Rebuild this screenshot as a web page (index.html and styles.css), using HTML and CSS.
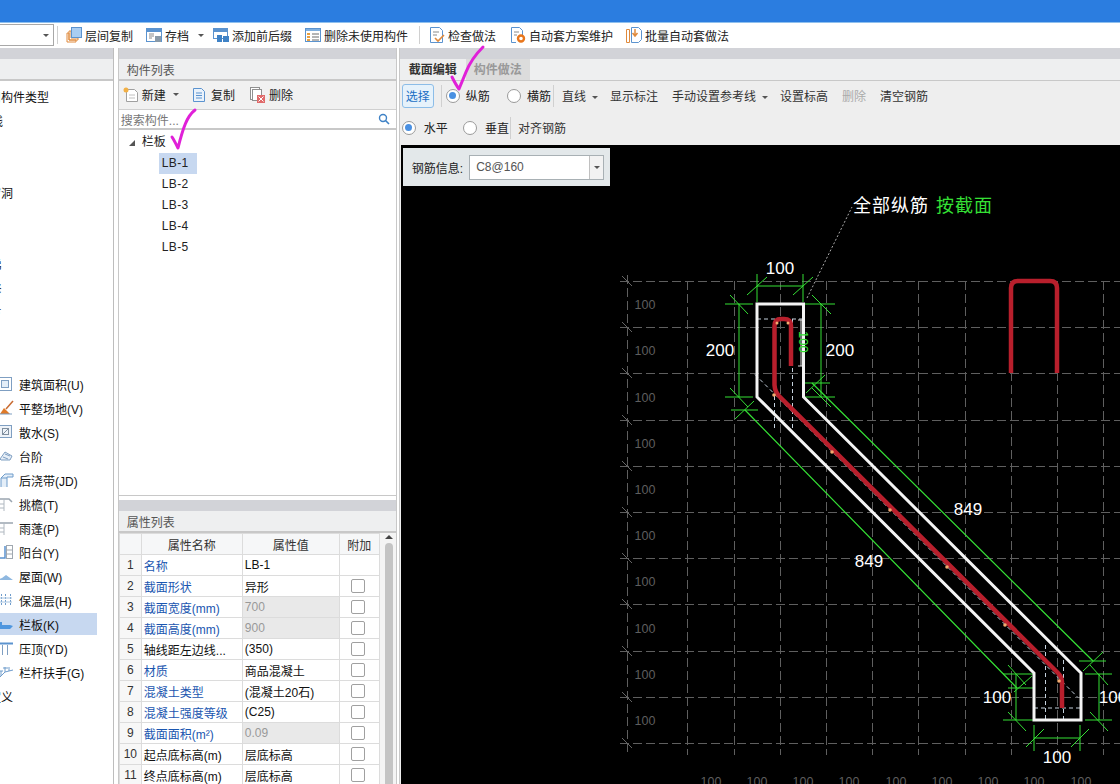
FILE: index.html
```html
<!DOCTYPE html>
<html lang="en">
<head>
    <meta charset="UTF-8">
    <title>截面编辑</title>
    <link rel="stylesheet" href="styles.css">
</head>
<body>
    <div class="titlebar"></div>

    <div class="toolbar">
        <div class="combo"><span class="arrow"></span></div>
        <span class="sep sep-first"></span>
        <div class="tool tool-tight">
            <svg viewBox="0 0 16 16"><path d="M1 15V6h2v7h7v2z" fill="none" stroke="#e08a3c"/><path d="M3 13V4h2v7h7v2z" fill="none" stroke="#e08a3c"/><rect x="5.500" y="0.500" width="10" height="10" fill="#a9cdf2" stroke="#5b93cf"/></svg>
            <span>层间复制</span>
        </div>
        <div class="tool tool-drop">
            <svg viewBox="0 0 16 16"><rect x="0.500" y="1.500" width="15" height="13" fill="#fff" stroke="#5b93cf"/><path d="M1 2h14v3H1z" fill="#5b93cf"/><path d="M3 7h5M3 9h5M3 11h3" stroke="#8a8a8a"/><rect x="9" y="9" width="6" height="6" fill="#8a9aa8"/></svg>
            <span>存档</span>
            <span class="arrow"></span>
        </div>
        <div class="tool tool-tight">
            <svg viewBox="0 0 16 16"><rect x="0.500" y="1.500" width="14" height="10" fill="#fff" stroke="#5b93cf"/><path d="M1 2h13v3H1z" fill="#5b93cf"/><rect x="4" y="8" width="5" height="7" fill="#3f82c6"/><rect x="10" y="9" width="6" height="6" fill="#3f82c6"/></svg>
            <span>添加前后缀</span>
        </div>
        <div class="tool">
            <svg viewBox="0 0 16 16"><rect x="0.500" y="1.500" width="15" height="13" fill="#fff" stroke="#5b93cf"/><path d="M1 2h14v2H1z" fill="#7fb0e0"/><path d="M7 7h7M7 10h7M7 13h7" stroke="#6a6a6a"/><path d="M2 6h3v2H2zM2 9h3v2H2zM2 12h3v2H2z" fill="#e8a040"/></svg>
            <span>删除未使用构件</span>
        </div>
        <span class="sep sep-mid"></span>
        <div class="tool">
            <svg viewBox="0 0 16 16"><path d="M1.500 0.500h9l3 3v12h-12z" fill="#fff" stroke="#5b93cf"/><path d="M4 5h6M4 8h4" stroke="#8a8a8a"/><path d="M6 11l3 3 6-6" fill="none" stroke="#e08a3c" stroke-width="1.600"/></svg>
            <span>检查做法</span>
        </div>
        <div class="tool tool-tight">
            <svg viewBox="0 0 16 16"><path d="M1.500 0.500h8l3 3v6M6 15.500H1.500v-15" fill="#fff" stroke="#5b93cf"/><path d="M4 5h5M4 8h3" stroke="#8a8a8a"/><circle cx="11" cy="11.500" r="3" fill="none" stroke="#e8761c" stroke-width="2.400"/></svg>
            <span>自动套方案维护</span>
        </div>
        <div class="tool">
            <svg viewBox="0 0 16 16"><path d="M0.500 2.500h3v13h-3z" fill="#fff" stroke="#e08a3c"/><path d="M5.500 0.500h7l3 3v9l-3 3h-7z" fill="#fff" stroke="#5b93cf"/><path d="M9 2v6M6.500 6L9 9l2.500-3" fill="none" stroke="#e08a3c" stroke-width="1.500"/></svg>
            <span>批量自动套做法</span>
        </div>
    </div>

    <div class="main">
        <div class="side">
            <div class="strip"></div>
            <div class="panel-head"></div>
            <ul class="nav">
                <li><span class="cut">常用构件类型</span></li>
                <li><span class="cut-two">轴线</span></li>
                <li></li>
                <li></li>
                <li><span class="cut">门窗洞</span></li>
                <li></li>
                <li></li>
                <li><span class="cut-dot">楼梯</span></li>
                <li><span class="cut-dot">装修</span></li>
                <li><span class="cut-dot">土方</span></li>
                <li></li>
                <li></li>
                <li>
                    <svg class="nav-icon" viewBox="0 0 20 20"><rect x="2.500" y="3.500" width="13" height="13" fill="none" stroke="#7f9fc2"/><rect x="5.500" y="6.500" width="7" height="7" fill="#e4eef8" stroke="#7f9fc2"/></svg>
                    <span>建筑面积(U)</span>
                </li>
                <li>
                    <svg class="nav-icon" viewBox="0 0 20 20"><path d="M4 16l4-6 6 6z" fill="#e07a28"/><path d="M10 11l7-8" stroke="#c86a30" stroke-width="1.500"/><path d="M2 16h14" stroke="#7f9fc2"/></svg>
                    <span>平整场地(V)</span>
                </li>
                <li>
                    <svg class="nav-icon" viewBox="0 0 20 20"><rect x="3.500" y="3.500" width="12" height="12" fill="#eef3f9" stroke="#7f9fc2"/><rect x="6.500" y="6.500" width="6" height="6" fill="none" stroke="#7f8f9f"/><path d="M7 12l5-5" stroke="#7f8f9f"/></svg>
                    <span>散水(S)</span>
                </li>
                <li>
                    <svg class="nav-icon" viewBox="0 0 20 20"><path d="M4 13l5-7 7 4-2 4H5z" fill="#e6eef7" stroke="#7f9fc2"/><path d="M7 11l5 2M9 8l5 2" stroke="#7f9fc2"/></svg>
                    <span>台阶</span>
                </li>
                <li>
                    <svg class="nav-icon" viewBox="0 0 20 20"><path d="M5 17V8l4-4h8v3h-6v10" fill="#e4eef8" stroke="#6f9ccb"/><path d="M5 8h6" stroke="#6f9ccb"/></svg>
                    <span>后浇带(JD)</span>
                </li>
                <li>
                    <svg class="nav-icon" viewBox="0 0 20 20"><path d="M3 17V5h10l3 3" fill="none" stroke="#9aa5b0" stroke-width="1.500"/><path d="M8 5v12M3 10h5M3 14h5" stroke="#b0b8c0"/></svg>
                    <span>挑檐(T)</span>
                </li>
                <li>
                    <svg class="nav-icon" viewBox="0 0 20 20"><path d="M3 17V5h14" fill="none" stroke="#9aa5b0" stroke-width="1.500"/><path d="M8 5v12M3 10h5M3 14h5" stroke="#b0b8c0"/></svg>
                    <span>雨蓬(P)</span>
                </li>
                <li>
                    <svg class="nav-icon" viewBox="0 0 20 20"><path d="M2 16h7V4" fill="none" stroke="#5b93cf" stroke-width="1.500"/><rect x="10.500" y="3.500" width="6" height="13" fill="none" stroke="#a0a8b0"/><path d="M11 8h5M11 12h5" stroke="#a0a8b0"/></svg>
                    <span>阳台(Y)</span>
                </li>
                <li>
                    <svg class="nav-icon" viewBox="0 0 20 20"><path d="M1 14l5-2 4-3 7 5z" fill="#8fb8e0"/></svg>
                    <span>屋面(W)</span>
                </li>
                <li>
                    <svg class="nav-icon" viewBox="0 0 20 20"><path d="M5.500 4v12M9.500 4v12M14.500 4v12" stroke="#6f9ccb" stroke-dasharray="2 1"/><path d="M4 8h12M4 12h12" stroke="#a8c4e0"/></svg>
                    <span>保温层(H)</span>
                </li>
                <li class="selected">
                    <svg class="nav-icon" viewBox="0 0 20 20"><path d="M3 8h3v3h8l3 1-3 3H3z" fill="#4f96de"/></svg>
                    <span>栏板(K)</span>
                </li>
                <li>
                    <svg class="nav-icon" viewBox="0 0 20 20"><path d="M2 5.500h15" stroke="#5b93cf" stroke-width="2"/><path d="M6.500 7v10M11.500 7v10" stroke="#7f9fc2"/></svg>
                    <span>压顶(YD)</span>
                </li>
                <li>
                    <svg class="nav-icon" viewBox="0 0 20 20"><path d="M3 16l6-6 8-2" fill="none" stroke="#6f9ccb"/><path d="M5 14V9M9 10V5M13 9V5M3 9h4M7 6h5" stroke="#6f9ccb"/></svg>
                    <span>栏杆扶手(G)</span>
                </li>
                <li><span class="cut">自定义</span></li>
            </ul>
        </div>

        <div class="middle">
            <div class="strip"></div>
            <div class="panel-head panel-title">构件列表</div>
            <div class="list-tools">
                <div class="tool tool-new">
                    <svg viewBox="0 0 16 16"><path d="M3.500 2.500h8l3 3v9h-11z" fill="#fff" stroke="#a0a0a0"/><path d="M6 8h6M6 11h6" stroke="#c0c0c0"/><circle cx="3" cy="3" r="2.500" fill="#f2b046"/></svg>
                    <span>新建</span>
                    <span class="arrow"></span>
                </div>
                <div class="tool">
                    <svg viewBox="0 0 16 16"><path d="M1.500 1.500h8l3 3v10h-11z" fill="#eaf2fb" stroke="#5b93cf"/><path d="M4 6h6M4 8.500h6M4 11h6" stroke="#5b93cf"/></svg>
                    <span>复制</span>
                </div>
                <div class="tool">
                    <svg viewBox="0 0 16 16"><rect x="0.500" y="0.500" width="9" height="12" fill="#fff" stroke="#909090"/><rect x="2.500" y="2.500" width="9" height="11" fill="#fff" stroke="#909090"/><rect x="7" y="8" width="8" height="8" fill="#e06a6a"/><path d="M8.500 9.500l5 5M13.500 9.500l-5 5" stroke="#fff"/></svg>
                    <span>删除</span>
                </div>
            </div>
            <div class="search">
                <span>搜索构件...</span>
                <svg viewBox="0 0 12 12"><circle cx="5" cy="5" r="3.500" fill="none" stroke="#3f82c6" stroke-width="1.400"/><path d="M7.500 7.500L11 11" stroke="#3f82c6" stroke-width="1.600"/></svg>
            </div>
            <div class="tree">
                <div class="tree-root"><span class="tree-caret"></span>栏板</div>
                <div class="tree-item active">LB-1</div>
                <div class="tree-item">LB-2</div>
                <div class="tree-item">LB-3</div>
                <div class="tree-item">LB-4</div>
                <div class="tree-item">LB-5</div>
            </div>

            <div class="strip"></div>
            <div class="panel-head panel-title">属性列表</div>
            <div class="props">
                <table>
                    <tr>
                        <th class="no-col"></th>
                        <th class="name-col">属性名称</th>
                        <th class="value-col">属性值</th>
                        <th class="extra-col">附加</th>
                    </tr>
                    <tr>
                        <td class="no">1</td><td class="name blue">名称</td><td class="val">LB-1</td><td></td>
                    </tr>
                    <tr>
                        <td class="no">2</td><td class="name blue">截面形状</td><td class="val">异形</td><td><span class="check"></span></td>
                    </tr>
                    <tr>
                        <td class="no">3</td><td class="name blue">截面宽度(mm)</td><td class="val off">700</td><td><span class="check"></span></td>
                    </tr>
                    <tr>
                        <td class="no">4</td><td class="name blue">截面高度(mm)</td><td class="val off">900</td><td><span class="check"></span></td>
                    </tr>
                    <tr>
                        <td class="no">5</td><td class="name">轴线距左边线...</td><td class="val">(350)</td><td><span class="check"></span></td>
                    </tr>
                    <tr>
                        <td class="no">6</td><td class="name blue">材质</td><td class="val">商品混凝土</td><td><span class="check"></span></td>
                    </tr>
                    <tr>
                        <td class="no">7</td><td class="name blue">混凝土类型</td><td class="val">(混凝土20石)</td><td><span class="check"></span></td>
                    </tr>
                    <tr>
                        <td class="no">8</td><td class="name blue">混凝土强度等级</td><td class="val">(C25)</td><td><span class="check"></span></td>
                    </tr>
                    <tr>
                        <td class="no">9</td><td class="name blue">截面面积(m²)</td><td class="val off">0.09</td><td><span class="check"></span></td>
                    </tr>
                    <tr>
                        <td class="no">10</td><td class="name">起点底标高(m)</td><td class="val">层底标高</td><td><span class="check"></span></td>
                    </tr>
                    <tr>
                        <td class="no">11</td><td class="name">终点底标高(m)</td><td class="val">层底标高</td><td><span class="check"></span></td>
                    </tr>
                </table>
                <div class="scrollbar">
                    <span class="scroll-up"></span>
                    <span class="scroll-thumb"></span>
                </div>
            </div>
        </div>

        <div class="editor">
            <div class="strip"></div>
            <div class="tabs">
                <span class="tab tab-on">截面编辑</span>
                <span class="tab tab-off">构件做法</span>
            </div>
            <div class="edit-row row-one">
                <button class="pick">选择</button>
                <span class="vline vline-a"></span>
                <label class="radio on"><i></i>纵筋</label>
                <label class="radio"><i></i>横筋</label>
                <span class="vline vline-b"></span>
                <span class="cmd cmd-drop">直线<span class="arrow"></span></span>
                <span class="cmd">显示标注</span>
                <span class="cmd cmd-drop">手动设置参考线<span class="arrow"></span></span>
                <span class="cmd">设置标高</span>
                <span class="cmd muted">删除</span>
                <span class="cmd">清空钢筋</span>
            </div>
            <div class="edit-row row-two">
                <label class="radio on"><i></i>水平</label>
                <label class="radio"><i></i>垂直</label>
                <span class="vline vline-c"></span>
                <span class="cmd">对齐钢筋</span>
            </div>
            <div class="canvas">
                <div class="rebar-info">
                    <span>钢筋信息:</span>
                    <div class="rebar-box">
                        <span class="rebar-value">C8@160</span>
                        <span class="rebar-drop"><span class="arrow"></span></span>
                    </div>
                </div>
                <svg class="drawing" viewBox="401 145 719 639">
                    <!-- grid -->
                    <path class="grid" d="M620 281.500H1120M620 327.500H1120M620 373.500H1120M620 420.500H1120M620 466.500H1120M620 512.500H1120M620 558.500H1120M620 604.500H1120M620 651.500H1120M620 697.500H1120M620 743.500H1120"/>
                    <path class="grid" d="M627.500 275V755M687.500 281V755M734.500 281V755M780.500 281V755M826.500 281V755M872.500 281V755M918.500 281V755M965.500 281V755M1011.500 281V755M1057.500 281V755M1103.500 281V755"/>
                    <path class="grid-tick" d="M622 276l10 10M622 322l10 10M622 368l10 10M622 415l10 10M622 461l10 10M622 507l10 10M622 553l10 10M622 599l10 10M622 646l10 10M622 692l10 10M622 738l10 10"/>
                    <g class="grid-label">
                        <text x="645" y="309">100</text>
                        <text x="645" y="355">100</text>
                        <text x="645" y="402">100</text>
                        <text x="645" y="448">100</text>
                        <text x="645" y="494">100</text>
                        <text x="645" y="540">100</text>
                        <text x="645" y="586">100</text>
                        <text x="645" y="633">100</text>
                        <text x="645" y="679">100</text>
                        <text x="645" y="725">100</text>
                        <text x="711" y="786">100</text>
                        <text x="757" y="786">100</text>
                        <text x="803" y="786">100</text>
                        <text x="849" y="786">100</text>
                        <text x="896" y="786">100</text>
                        <text x="942" y="786">100</text>
                        <text x="988" y="786">100</text>
                        <text x="1034" y="786">100</text>
                        <text x="1081" y="786">100</text>
                    </g>

                    <!-- inner reference lines -->
                    <path class="inner" d="M757 319H803M774.500 319V430M792.500 319V430M755 374.500L1078 697.500M1034 708H1080M1045.500 645V720M1063.500 660V720"/>
                    <path class="leader" d="M807 298L852 207"/>

                    <!-- dimensions -->
                    <path class="dim" d="M757 286H803M757 274V302M803 274V302M747 295L767 277M793 295L813 277"/>
                    <path class="dim" d="M739 304V397M725 304H753M725 397H753M730 295L748 314M730 388L748 407"/>
                    <path class="dim" d="M821 304V397M805 304H835M805 397H835M805 383H830M812 295L831 314M812 388L831 407M806 393L825 375"/>
                    <path class="dim dim-long" d="M812 383L1093 661M745 410L1017 688"/>
                    <path class="dim" d="M731 410H758M735 419L754 401M1079 661H1106M1083 671L1103 652M1008 688H1034"/>
                    <path class="dim" d="M1016 674V720M1003 674H1034M1003 720H1034M1008 665L1026 685M1008 712L1026 731M1014 692L1032 676"/>
                    <path class="dim" d="M1099 674V720M1085 674H1112M1085 720H1112M1090 665L1108 685M1090 712L1108 731"/>
                    <path class="dim" d="M1034 738H1080M1034 725V751M1080 725V751M1026 747L1044 729M1071 747L1089 729"/>
                    <path class="bracket" d="M801 320V366M798 320H804M798 366H804"/>

                    <!-- section outline and rebar -->
                    <path class="outline" d="M757 304H803.500V397L1081 673V720H1034V673L757 397Z"/>
                    <text class="dim-side" transform="translate(799 331) rotate(90)">100</text>
                    <path class="rebar" d="M791 366V326Q791 319 784 319H781Q774.500 319 774.500 326V385Q775 392 779 396L1058 673Q1062 677 1062 682V708"/>
                    <path class="rebar" d="M1011 373V288Q1011 281 1018 281H1050Q1057 281 1057 288V373"/>
                    <g class="joint">
                        <circle cx="777" cy="323" r="1.500"/>
                        <circle cx="788" cy="323" r="1.500"/>
                        <circle cx="774" cy="395" r="1.800"/>
                        <circle cx="832" cy="452" r="1.800"/>
                        <circle cx="890" cy="510" r="1.800"/>
                        <circle cx="947" cy="567" r="1.800"/>
                        <circle cx="1005" cy="625" r="1.800"/>
                        <circle cx="1059" cy="681" r="1.800"/>
                    </g>

                    <!-- labels -->
                    <g class="size-label">
                        <text x="780" y="274">100</text>
                        <text x="720" y="356">200</text>
                        <text x="840" y="356">200</text>
                        <text x="968" y="515">849</text>
                        <text x="869" y="567">849</text>
                        <text x="997" y="703">100</text>
                        <text x="1057" y="763">100</text>
                        <text x="1113" y="703">100</text>
                    </g>
                    <text class="note" x="853" y="212">全部纵筋</text>
                    <text class="note note-green" x="936" y="212">按截面</text>
                </svg>
            </div>
        </div>
    </div>

    <!-- hand drawn ticks over the window -->
    <svg class="ticks" viewBox="0 0 1120 784">
        <path d="M483 47C475 55 470 62 466 72L459 89C456 85 454 81 452 77"/>
        <path d="M195 110C187 116 183 128 178 148C176 144 174 140 172 137"/>
    </svg>
</body>
</html>
```

FILE: styles.css
```css
* {
    box-sizing: border-box;
    margin: 0;
    padding: 0;
}

body {
    width: 1120px;
    height: 784px;
    overflow: hidden;
    position: relative;
    background: #fff;
    color: #222;
    font-family: "Liberation Sans", "Noto Sans CJK SC", sans-serif;
    font-size: 12px;
}

.titlebar {
    height: 23px;
    background: #2b7de0;
    border-bottom: 1px solid #8fc0ee;
}

.arrow {
    display: inline-block;
    width: 0;
    height: 0;
    border-left: 3px solid transparent;
    border-right: 3px solid transparent;
    border-top: 3px solid #555;
}

/* top toolbar */
.toolbar {
    height: 25px;
    display: flex;
    align-items: center;
    padding-bottom: 1px;
    background: #fff;
}

.combo {
    width: 54px;
    height: 22px;
    border: 1px solid #a8a8a8;
    border-left: none;
    display: flex;
    align-items: center;
    justify-content: flex-end;
    padding-right: 4px;
}

.sep {
    width: 1px;
    height: 18px;
    background: #d0d0d0;
}

.sep-first {
    margin: 0 8px 0 3px;
}

.sep-mid {
    margin: 0 9px 0 -3px;
}

.tool {
    display: flex;
    align-items: center;
    gap: 3px;
    margin-right: 14px;
}

.tool svg {
    width: 16px;
    height: 16px;
    flex: none;
}

.tool-tight {
    margin-right: 13px;
}

.tool-drop {
    margin-right: 9px;
}

.tool-drop .arrow {
    margin-left: 6px;
}

/* panels */
.main {
    height: 736px;
    display: flex;
}

.strip {
    height: 11px;
    background: #d2d3d8;
}

.panel-head {
    height: 22px;
    background: #eeeff0;
    border-bottom: 2px solid #c8c8c8;
}

.panel-title {
    color: #555;
    padding: 5px 0 0 8px;
    line-height: 14px;
}

.side {
    width: 114px;
    border-right: 1px solid #bdbdbd;
    overflow: hidden;
}

.nav {
    list-style: none;
    padding-top: 3px;
}

.nav li {
    height: 24px;
    display: flex;
    align-items: center;
    overflow: hidden;
    white-space: nowrap;
    color: #111;
}

.nav .selected {
    width: 97px;
    height: 22px;
    margin: 1px 0;
    background: #c7d8f0;
}

.nav-icon {
    width: 20px;
    height: 20px;
    flex: none;
    margin: 0 3px 0 -4px;
}

.cut {
    margin-left: -23px;
}

.cut-two {
    margin-left: -21px;
}

.cut-dot {
    margin-left: -22.500px;
}

.middle {
    width: 279px;
    margin-left: 4px;
    border-left: 1px solid #c8c8c8;
    border-right: 1px solid #c8c8c8;
    display: flex;
    flex-direction: column;
}

.list-tools {
    height: 29px;
    background: #f1f1f1;
    display: flex;
    align-items: center;
    padding: 0 0 1px 4px;
    border-bottom: 1px solid #d0d0d0;
}

.list-tools .tool {
    margin-right: 15px;
}

.list-tools .tool-new {
    margin-right: 13px;
}

.tool-new .arrow {
    margin-left: 4px;
}

.search {
    height: 20px;
    display: flex;
    align-items: center;
    justify-content: space-between;
    padding: 0 6px 0 2px;
    color: #777;
    border-bottom: 2px solid #c8c8c8;
}

.search svg {
    width: 12px;
    height: 12px;
}

.tree {
    height: 366px;
    border-bottom: 1px solid #c8c8c8;
    margin-bottom: 4px;
    padding-top: 2px;
}

.tree-root {
    height: 21px;
    line-height: 21px;
    padding-left: 23px;
    position: relative;
}

.tree-caret {
    position: absolute;
    left: 10px;
    top: 8px;
    border-left: 6px solid transparent;
    border-bottom: 6px solid #555;
}

.tree-item {
    width: 38px;
    height: 21px;
    line-height: 21px;
    margin-left: 40px;
    padding-left: 3px;
    letter-spacing: 0.300px;
}

.tree-item.active {
    background: #c7d8f0;
}

/* property table */
.props {
    flex: 1;
    display: flex;
    overflow: hidden;
}

table {
    width: 260px;
    height: 252px;
    border-collapse: collapse;
    table-layout: fixed;
    align-self: flex-start;
}

th, td {
    height: 21px;
    padding: 0;
    border: 1px solid #dcdcdc;
    font-weight: normal;
    text-align: center;
    white-space: nowrap;
    overflow: hidden;
}

th {
    background: #f6f7f8;
    color: #333;
}

.no-col {
    width: 22px;
}

.name-col {
    width: 101px;
}

.value-col {
    width: 97px;
}

.extra-col {
    width: 40px;
}

.no {
    background: #f7f7f7;
    color: #333;
}

.name, .val {
    text-align: left;
    padding-left: 2px;
    color: #111;
}

.blue {
    color: #1a56b0;
}

.off {
    background: #e9e9e9;
    color: #999;
}

.check {
    display: block;
    width: 14px;
    height: 14px;
    margin: 0 auto;
    position: relative;
    right: 1px;
    border: 1px solid #a0a0a0;
    border-radius: 2px;
    background: #fff;
}

.scrollbar {
    width: 17px;
    position: relative;
    background: #f4f4f4;
}

.scroll-up {
    position: absolute;
    left: 5px;
    top: 2px;
    border-left: 4px solid transparent;
    border-right: 4px solid transparent;
    border-bottom: 4px solid #444;
}

.scroll-thumb {
    position: absolute;
    left: 5px;
    top: 10px;
    bottom: 0;
    width: 8px;
    border-radius: 4px 4px 0 0;
    background: #c4c4c4;
}

/* section editor */
.editor {
    width: 722px;
    margin-left: 2px;
    border-left: 1px solid #c8c8c8;
    background: #eee;
    display: flex;
    flex-direction: column;
}

.tabs {
    height: 22px;
    display: flex;
    background: #eeeff0;
    border-bottom: 1px solid #c8c8c8;
    padding-left: 3px;
}

.tab {
    height: 21px;
    line-height: 22px;
    text-align: center;
}

.tab-on {
    width: 60px;
    font-weight: bold;
    color: #333;
}

.tab-off {
    width: 64px;
    margin-left: 3px;
    background: #dcdcdc;
    color: #999;
    font-weight: bold;
}

.edit-row {
    display: flex;
    align-items: center;
    padding: 0 0 2px 2px;
}

.row-one {
    height: 31px;
}

.row-two {
    height: 33px;
}

.pick {
    width: 32px;
    height: 24px;
    border: 1px solid #8cbde8;
    border-radius: 3px;
    background: #e6f2fb;
    color: #1a6fc4;
    font-family: inherit;
    font-size: 12px;
}

.vline {
    width: 1px;
    height: 22px;
    background: #d0d0d0;
}

.vline-a {
    margin: 0 4px 0 7px;
}

.vline-b {
    margin: 0 8px 0 2px;
}

.vline-c {
    margin: 0 7px 0 1px;
}

.radio {
    display: flex;
    align-items: center;
    gap: 6px;
}

.row-two .radio {
    gap: 8px;
}

.radio + .radio {
    margin-left: 17px;
}

.row-two .radio + .radio {
    margin-left: 15px;
}

.radio i {
    width: 14px;
    height: 14px;
    border-radius: 50%;
    border: 1px solid #9a9a9a;
    background: #fff;
    display: flex;
    align-items: center;
    justify-content: center;
}

.radio.on i::after {
    content: "";
    width: 7px;
    height: 7px;
    border-radius: 50%;
    background: #4a90e2;
}

.cmd {
    margin-right: 14px;
    color: #333;
    white-space: nowrap;
}

.cmd-drop {
    margin-right: 12px;
}

.cmd .arrow {
    margin-left: 6px;
    vertical-align: 2px;
}

.muted {
    color: #aaa;
}

/* drawing */
.canvas {
    flex: 1;
    margin-left: 1px;
    background: #000;
    position: relative;
    overflow: hidden;
}

.drawing {
    display: block;
    width: 719px;
    height: 639px;
}

.rebar-info {
    position: absolute;
    left: 2px;
    top: 3px;
    width: 207px;
    height: 38px;
    background: #e3e8ea;
    display: flex;
    align-items: center;
    padding-left: 9px;
    gap: 6px;
}

.rebar-box {
    width: 135px;
    height: 25px;
    display: flex;
    background: #fff;
    border: 1px solid #a8b0b4;
}

.rebar-value {
    flex: 1;
    line-height: 23px;
    padding-left: 6px;
    color: #555;
}

.rebar-drop {
    width: 14px;
    background: #f2f2f2;
    border-left: 1px solid #c0c0c0;
    display: flex;
    align-items: center;
    justify-content: center;
}

.grid {
    stroke: #5f5f5f;
    stroke-dasharray: 9 4;
    fill: none;
}

.grid-tick {
    stroke: #666;
    fill: none;
}

.grid-label text {
    fill: #5e5e5e;
    font-size: 12.500px;
    text-anchor: middle;
}

.inner {
    stroke: #c4d0dc;
    stroke-dasharray: 4 3;
    fill: none;
}

.leader {
    stroke: #aaa;
    stroke-dasharray: 2 2;
    fill: none;
}

.dim {
    stroke: #35e035;
    fill: none;
}

.dim-long {
    stroke-width: 1.200;
}

.bracket {
    stroke: #ddd;
    fill: none;
}

.dim-side {
    fill: #35e035;
    font-size: 13px;
}

.outline {
    stroke: #f4f4f4;
    stroke-width: 3;
    fill: none;
}

.rebar {
    stroke: #b81f2c;
    stroke-width: 4.500;
    fill: none;
}

.joint circle {
    fill: #f2ab70;
}

.size-label text {
    fill: #fff;
    font-size: 17px;
    text-anchor: middle;
}

.note {
    fill: #fff;
    font-size: 18px;
    letter-spacing: 1px;
}

.note-green {
    fill: #35e035;
}

.ticks {
    position: absolute;
    left: 0;
    top: 0;
    width: 1120px;
    height: 784px;
    pointer-events: none;
}

.ticks path {
    stroke: #e020d8;
    stroke-width: 3;
    stroke-linecap: round;
    stroke-linejoin: round;
    fill: none;
}
```
